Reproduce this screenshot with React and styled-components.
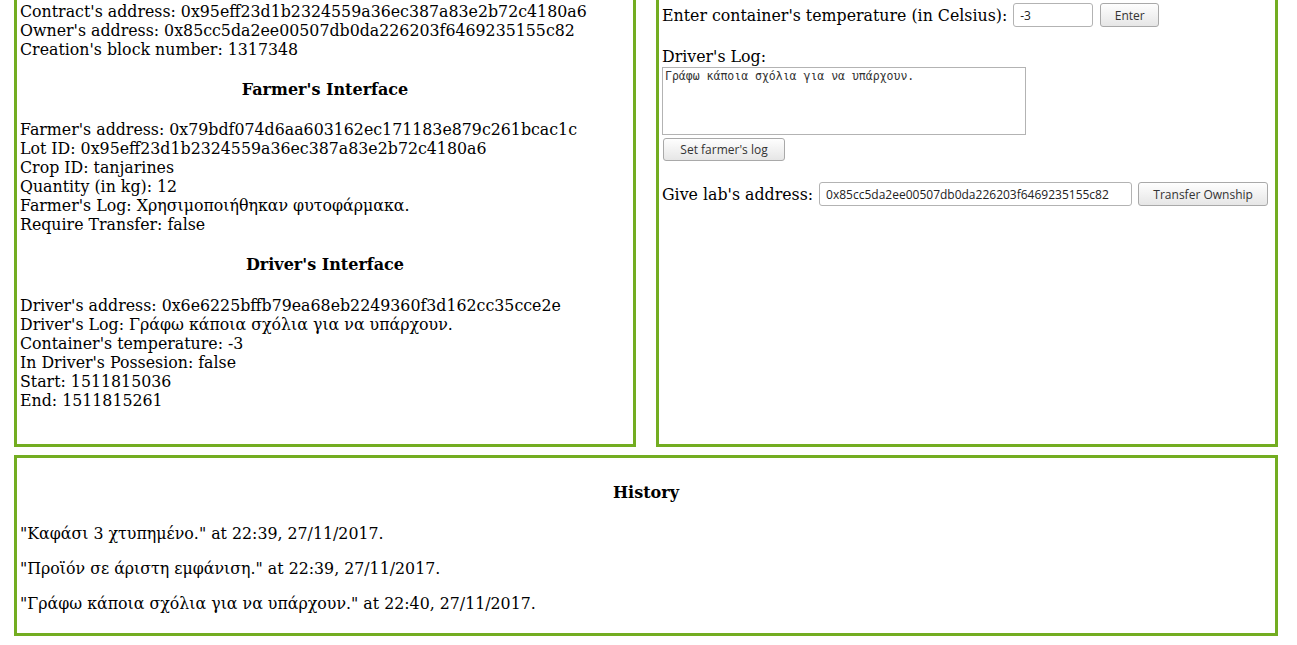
import React from "react"
import styled, { createGlobalStyle } from "styled-components"

const Global = createGlobalStyle`
  body {
    margin: 0;
    background-color: #ffffff;
    color: #000000;
    font-family: "DejaVu Serif", serif;
    font-size: 15.8px;
  }
`

const Page = styled.div`
  width: 1264px;
  padding-left: 14px;
`

const Top = styled.div`
  display: grid;
  grid-template-columns: 622px 622px;
  column-gap: 20px;
`

const Panel = styled.div`
  border: 3px solid #73ad21;
  border-top: none;
  padding: ${p => p.$pad || "2px 3px 34px 3px"};
`

const Bottom = styled.div`
  margin-top: 8px;
  border: 3px solid #73ad21;
  padding: 4px 3px 4px 3px;
`

const Line = styled.div`
  line-height: 19px;
`

const Heading = styled.h4`
  margin: ${p => p.$before || 21}px 0 ${p => p.$after || 21}px;
  font-size: 16px;
  line-height: 19px;
  text-align: center;
`

const Para = styled.p`
  margin: 16px 0;
  line-height: 19px;
`

const Row = styled.div`
  display: flex;
  align-items: center;
  height: 26px;
  margin-top: ${p => p.$top || 0}px;
`

const Label = styled.span`
  line-height: 19px;
  margin-right: 6px;
`

const Field = styled.input`
  box-sizing: border-box;
  width: ${p => p.$w}px;
  height: 24px;
  border: 1px solid #b3b3b3;
  border-radius: 3px;
  padding: 0 6px;
  font-family: "Open Sans", sans-serif;
  font-size: 12px;
  color: #222;
  background: #fff;
`

const Button = styled.button`
  box-sizing: border-box;
  height: ${p => p.$h || 24}px;
  width: ${p => p.$w}px;
  margin-left: ${p => p.$ml || 0}px;
  padding: 0;
  border: 1px solid #a9a9a9;
  border-radius: 3px;
  background: linear-gradient(#fefefe, #e6e6e6);
  font-family: "Open Sans", sans-serif;
  font-size: 12px;
  color: #333;
`

const SetButton = styled(Button)`
  display: block;
  margin: 3px 0 0 1px;
`

const LogLabel = styled.div`
  margin-top: 19px;
  line-height: 19px;
`

const LogBox = styled.textarea`
  display: block;
  box-sizing: border-box;
  width: 364px;
  height: 68px;
  margin: 1px 0 0 0;
  padding: 1px 2px;
  border: 1px solid #b3b3b3;
  font-family: "DejaVu Sans Mono", monospace;
  font-size: 11.5px;
  color: #333;
  resize: none;
`

const App = () => (
  <Page>
    <Global />
    <Top>
      <Panel>
        <Line>Contract's address: 0x95eff23d1b2324559a36ec387a83e2b72c4180a6</Line>
        <Line>Owner's address: 0x85cc5da2ee00507db0da226203f6469235155c82</Line>
        <Line>Creation's block number: 1317348</Line>
        <Heading>Farmer's Interface</Heading>
        <Line>Farmer's address: 0x79bdf074d6aa603162ec171183e879c261bcac1c</Line>
        <Line>Lot ID: 0x95eff23d1b2324559a36ec387a83e2b72c4180a6</Line>
        <Line>Crop ID: tanjarines</Line>
        <Line>Quantity (in kg): 12</Line>
        <Line>Farmer's Log: Χρησιμοποιήθηκαν φυτοφάρμακα.</Line>
        <Line>Require Transfer: false</Line>
        <Heading $after={22}>Driver's Interface</Heading>
        <Line>Driver's address: 0x6e6225bffb79ea68eb2249360f3d162cc35cce2e</Line>
        <Line>Driver's Log: Γράφω κάποια σχόλια για να υπάρχουν.</Line>
        <Line>Container's temperature: -3</Line>
        <Line>In Driver's Possesion: false</Line>
        <Line>Start: 1511815036</Line>
        <Line>End: 1511815261</Line>
      </Panel>
      <Panel $pad="2px 3px 0 3px">
        <Row>
          <Label>Enter container's temperature (in Celsius):</Label>
          <Field $w={80} defaultValue="-3" />
          <Button $w={59} $ml={7}>Enter</Button>
        </Row>
        <LogLabel>Driver's Log:</LogLabel>
        <LogBox defaultValue="Γράφω κάποια σχόλια για να υπάρχουν." />
        <SetButton $w={122} $h={23}>Set farmer's log</SetButton>
        <Row $top={20}>
          <Label>Give lab's address:</Label>
          <Field $w={313} defaultValue="0x85cc5da2ee00507db0da226203f6469235155c82" />
          <Button $w={130} $ml={6}>Transfer Ownship</Button>
        </Row>
      </Panel>
    </Top>
    <Bottom>
      <Heading $after={22}>History</Heading>
      <Para>"Καφάσι 3 χτυπημένο." at 22:39, 27/11/2017.</Para>
      <Para>"Προϊόν σε άριστη εμφάνιση." at 22:39, 27/11/2017.</Para>
      <Para>"Γράφω κάποια σχόλια για να υπάρχουν." at 22:40, 27/11/2017.</Para>
    </Bottom>
  </Page>
)

export default App
